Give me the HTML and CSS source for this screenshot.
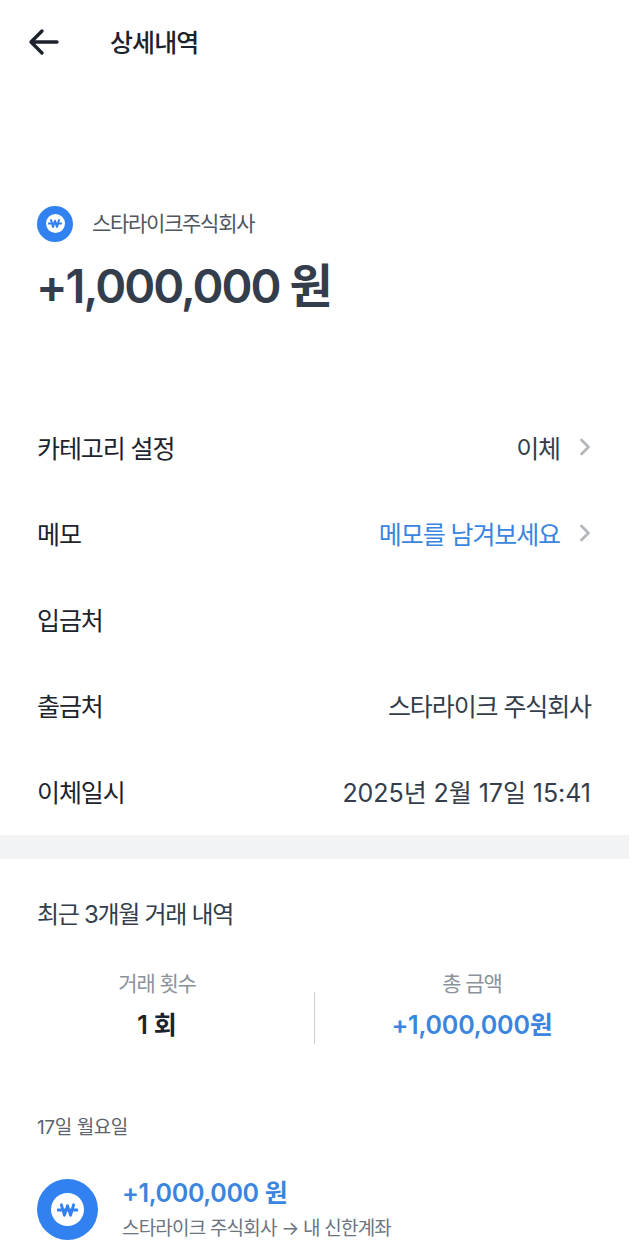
FILE: index.html
```html
<!DOCTYPE html>
<html lang="ko">
<head>
<meta charset="utf-8">
<title>상세내역</title>
<link rel="stylesheet" href="styles.css">
</head>
<body>
<div class="page">
  <header class="topbar">
    <svg class="back" width="32" height="32" viewBox="0 0 32 32" fill="none"><path d="M29 16H3.500M14 5L3 16l11 11" stroke="#1c232c" stroke-width="3.400" stroke-linecap="round" stroke-linejoin="round"/></svg>
    <h1 class="title">상세내역</h1>
  </header>
  <section class="summary">
    <div class="source">
      <span class="coin coin-small"><span class="coin-hole"><svg width="14" height="9" viewBox="0 0 24 16" fill="none"><path d="M1 8h22M5 2l3.500 12L12 3l3.500 11L19 2" stroke="#3182f0" stroke-width="3.600" stroke-linejoin="round" stroke-linecap="round"/></svg></span></span>
      <span class="source-name">스타라이크주식회사</span>
    </div>
    <div class="amount">+1,000,000 원</div>
  </section>
  <section class="details">
    <div class="row"><span>카테고리 설정</span><span class="value">이체<svg class="chev" width="12" height="20" viewBox="0 0 12 20" fill="none"><path d="M2.500 3l7 7-7 7" stroke="#b4b8bd" stroke-width="2.800" stroke-linecap="round" stroke-linejoin="round"/></svg></span></div>
    <div class="row"><span>메모</span><span class="value link">메모를 남겨보세요<svg class="chev" width="12" height="20" viewBox="0 0 12 20" fill="none"><path d="M2.500 3l7 7-7 7" stroke="#b4b8bd" stroke-width="2.800" stroke-linecap="round" stroke-linejoin="round"/></svg></span></div>
    <div class="row"><span>입금처</span></div>
    <div class="row"><span>출금처</span><span class="value">스타라이크 주식회사</span></div>
    <div class="row"><span>이체일시</span><span class="value date-value">2025년 2월 17일 15:41</span></div>
  </section>
  <div class="band"></div>
  <section class="recent">
    <h2 class="recent-title">최근 3개월 거래 내역</h2>
    <div class="stats">
      <div class="stat"><div class="stat-label">거래 횟수</div><div class="stat-value">1 회</div></div>
      <div class="divider"></div>
      <div class="stat"><div class="stat-label">총 금액</div><div class="stat-value blue">+1,000,000원</div></div>
    </div>
    <div class="date">17일 월요일</div>
    <div class="tx">
      <span class="coin coin-large"><span class="coin-hole"><svg width="21" height="14" viewBox="0 0 24 16" fill="none"><path d="M1 8h22M5 2l3.500 12L12 3l3.500 11L19 2" stroke="#3182f0" stroke-width="3.200" stroke-linejoin="round" stroke-linecap="round"/></svg></span></span>
      <div class="tx-text">
        <div class="tx-amount">+1,000,000 원</div>
        <div class="tx-desc">스타라이크 주식회사 → 내 신한계좌</div>
      </div>
    </div>
  </section>
</div>
</body>
</html>
```
FILE: styles.css
```css
* { box-sizing: border-box; }
html, body { margin: 0; background: #fff; }
body { font-family: "Inter", "Noto Sans CJK KR", sans-serif; color: #1c232c; }
.page { width: 629px; height: 1242px; overflow: hidden; }
.topbar { display: flex; align-items: center; height: 84px; padding-left: 28px; }
.back { flex: none; }
.title { margin: 2px 0 0 50px; font-size: 25px; font-weight: 500; letter-spacing: -0.900px; line-height: 32px; }
.summary { padding: 121px 38px 0 37px; height: 321px; }
.source { display: flex; align-items: center; gap: 19px; }
.coin { display: flex; align-items: center; justify-content: center; background: #3182f0; border-radius: 50%; flex: none; }
.coin-hole { display: flex; align-items: center; justify-content: center; background: #fff; border-radius: 50%; }
.coin-small { width: 36px; height: 36px; }
.coin-small .coin-hole { width: 19px; height: 19px; }
.coin-large { width: 61px; height: 61px; }
.coin-large .coin-hole { width: 33px; height: 33px; }
.source-name { font-size: 21px; line-height: 36px; padding-top: 1px; color: #4e5761; letter-spacing: -1.300px; }
.amount { margin-top: 14px; margin-left: -1px; font-size: 47px; line-height: 60px; font-weight: 600; color: #333d4b; letter-spacing: -2px; white-space: nowrap; }
.details { padding: 0 38px 0 37px; }
.row { display: flex; justify-content: space-between; align-items: center; height: 86px; padding-bottom: 2px; font-size: 25px; letter-spacing: -1.100px; }
.value { display: flex; align-items: center; color: #333d4b; }
.date-value { letter-spacing: -0.050px; }
.chev { margin-left: 19px; }
.link { color: #3a85e0; }
.band { height: 24px; background: #f2f3f5; }
.recent-title { margin: 38px 0 0; padding-left: 37px; font-size: 24px; line-height: 36px; font-weight: 400; color: #333d4b; letter-spacing: -1.300px; }
.stats { display: grid; grid-template-columns: 1fr 1px 1fr; margin-top: 36px; }
.stat { text-align: center; }
.divider { margin-top: 23px; height: 52px; background: #ccd0d4; }
.stat-label { font-size: 21px; line-height: 30px; color: #8b929a; letter-spacing: -1.100px; }
.stat-value { font-size: 25px; line-height: 30px; font-weight: 600; margin-top: 11px; letter-spacing: -0.200px; }
.blue { color: #3a85e0; }
.date { margin-top: 70px; padding-left: 37px; font-size: 19px; line-height: 28px; color: #5b636c; letter-spacing: -0.400px; }
.tx { display: flex; align-items: flex-start; gap: 24px; margin-top: 37px; padding-left: 37px; }
.tx-amount { font-size: 25px; line-height: 28px; font-weight: 600; color: #3a85e0; letter-spacing: -0.350px; white-space: nowrap; }
.tx-desc { margin-top: 8px; font-size: 19px; line-height: 28px; color: #6b7480; letter-spacing: -0.800px; white-space: nowrap; }
```
